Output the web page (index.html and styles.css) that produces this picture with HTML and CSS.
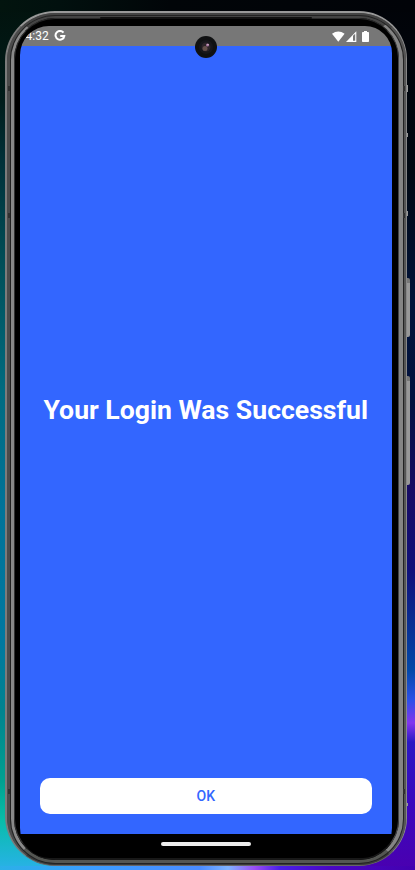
FILE: index.html
```
<!DOCTYPE html>
<html lang="en">
<head>
<meta charset="utf-8">
<title>Login successful</title>
<link rel="stylesheet" href="styles.css">
</head>
<body>
<main class="desktop">
  <div class="side-key power"></div>
  <div class="side-key volume"></div>
  <div class="nub first"></div>
  <div class="nub second"></div>
  <div class="nub third"></div>
  <div class="nub fourth"></div>
  <div class="antenna left upper"></div>
  <div class="antenna left middle"></div>
  <div class="antenna left lower"></div>
  <div class="antenna right upper"></div>
  <div class="antenna right middle"></div>
  <div class="antenna right lower"></div>
  <div class="phone">
    <div class="rail">
      <div class="groove">
        <div class="rim">
          <div class="bezel">
            <div class="screen">
              <header class="status">
                <span class="clock">4:32</span>
                <svg class="google" viewBox="0 0 12 12"><path d="M9.5 2.7A4.4 4.4 0 1 0 10.3 6H6.2" fill="none" stroke="#fff" stroke-width="2"/></svg>
                <span class="spacer"></span>
                <svg class="wifi" viewBox="0 0 13 11"><path d="M0 2.700Q6.300-1.900 12.600 2.700L6.300 10.800Z" fill="#fff"/></svg>
                <svg class="signal" viewBox="0 0 11 11"><path d="M0 11L10.300.3V11Z" fill="#fff"/><path d="M7 4.800L9.200 2.700V9.800H7Z" fill="#777"/></svg>
                <svg class="battery" viewBox="0 0 7 11"><path d="M2 0h3v1h1.200q.8 0 .8.8v8.400q0 .8-.8.800H.8Q0 11 0 10.200V1.800Q0 1 .8 1H2Z" fill="#fff"/></svg>
              </header>
              <section class="content">
                <h1>Your Login Was Successful</h1>
                <button class="ok" type="button">OK</button>
              </section>
              <footer class="navigation"><span class="handle"></span></footer>
            </div>
          </div>
        </div>
      </div>
    </div>
    <div class="speaker"></div>
    <svg class="camera" viewBox="0 0 22 22"><circle cx="11" cy="11" r="11" fill="#101112"/><circle cx="11" cy="11" r="7" fill="#17171b"/><circle cx="11" cy="11" r="4.500" fill="#2c2429"/><circle cx="10" cy="12.500" r="2.500" fill="#65504b"/><circle cx="12.500" cy="9" r="1.500" fill="#a16f98"/><circle cx="13" cy="8.700" r=".6" fill="#f3dff0"/></svg>
  </div>
</main>
</body>
</html>
```
FILE: styles.css
```
* { box-sizing: border-box; }

body {
  margin: 0;
  font-family: Roboto, "Liberation Sans", sans-serif;
}

.desktop {
  position: relative;
  width: 415px;
  height: 870px;
  padding: 11px 8px 0 5px;
  overflow: hidden;
  background:
    linear-gradient(90deg, #02140e 0, #01100e 60px, #010508 170px, #010308 415px) 0 0 / 415px 12px no-repeat,
    linear-gradient(90deg, #2bb0e8 0, #3b9dff 90px, #4a8cff 200px, #7fb4ff 228px, #9a4df5 255px, #4a1fe8 280px, #4a08c4 330px, #4300b0 415px) 0 866px / 415px 4px no-repeat,
    linear-gradient(#010308 0, #010812 170px, #01133a 300px, #02123f 400px, #170b64 490px, #10107a 570px, #0348a8 670px, #2c50e8 700px, #8235ef 723px, #2a18c4 742px, #3a08be 800px, #4a00b0 870px) 300px 0 / 115px 870px no-repeat,
    linear-gradient(#02120d 0, #001c1a 100px, #003038 160px, #00505a 270px, #006b80 390px, #007399 510px, #0078a0 640px, #00838f 710px, #00a090 780px, #08bda8 820px, #22b4dc 860px, #2bb0e8 870px) 0 0 / 150px 870px no-repeat,
    #010508;
}

.phone {
  position: relative;
  height: 855px;
}

.rail,
.groove,
.rim,
.bezel {
  height: 100%;
  border-style: solid;
}

.rail {
  border-width: 2px 1px 1px 2px;
  border-color: #999 #888 #666 #7b7b7b;
  border-radius: 50px 48px 48px 50px;
  background: #4c4c4c;
}

.groove {
  border-width: 3px 3px 2px 4px;
  border-color: #444 #555 #393939 #4b4b4b;
  border-radius: 48px 47px 47px 48px;
  background: #111;
}

.rim {
  border-width: 2px 4px 3px 3px;
  border-color: #444 #858585 #545652 #898989;
  border-radius: 44px;
  background: #000;
  box-shadow: 0 0 0 1px #222;
}

.bezel {
  padding: 7px 6px 0 5px;
  border-width: 1px 1px 2px;
  border-color: #292929 #444 #181818 #333;
  border-radius: 41px 40px 40px 41px;
  background: #000;
}

.screen {
  display: flex;
  flex-direction: column;
  height: 100%;
  overflow: hidden;
  border-radius: 29px 27px 30px 30px;
  background: #000;
}

.status {
  display: flex;
  flex: 0 0 19.5px;
  align-items: center;
  padding: 0 23px 0 5.500px;
  background: #777;
  color: #fff;
}

.clock {
  width: 23px;
  font-size: 12px;
  line-height: 20px;
}

.google {
  width: 12px;
  height: 12px;
  margin-left: 5px;
}

.spacer { flex: 1; }

.wifi {
  width: 13px;
  height: 11px;
}

.signal {
  width: 11px;
  height: 11px;
  margin-left: 1px;
}

.battery {
  width: 7px;
  height: 11px;
  margin-left: 5px;
}

.content {
  display: flex;
  flex: 0 0 788px;
  flex-direction: column;
  padding: 0 20px 20px 19.5px;
  background: #3366ff;
}

h1 {
  display: flex;
  flex: 1;
  align-items: center;
  justify-content: center;
  margin: 0;
  padding-bottom: 4px;
  color: #fff;
  font-size: 26.6px;
  font-weight: 700;
  line-height: 32px;
  white-space: nowrap;
}

.ok {
  flex: 0 0 36.5px;
  padding: 0;
  border: 0;
  border-radius: 10px;
  background: #fff;
  color: #3366ff;
  font: 500 14px/36px Roboto, sans-serif;
}

.navigation {
  display: flex;
  flex: 1;
  justify-content: center;
  padding-top: 8px;
}

.handle {
  width: 90px;
  height: 4px;
  border-radius: 2px;
  background: #ededed;
}

.camera {
  position: absolute;
  top: 25px;
  left: 190px;
  width: 22px;
  height: 22px;
}

.speaker {
  position: absolute;
  top: 6px;
  left: 95px;
  width: 212px;
  height: 2px;
  border-radius: 1px;
  background: #111;
}

.side-key {
  position: absolute;
  left: 406px;
  width: 4px;
  border-top: 5px solid #777;
  border-radius: 0 2px 2px 0;
  background: #989898;
}

.power { top: 278px; height: 59px; }
.volume { top: 376px; height: 109px; }

.nub {
  position: absolute;
  left: 406px;
  width: 2px;
  height: 5px;
  background: #999;
}

.first { top: 85px; height: 7px; }
.second { top: 133px; height: 4px; }
.third { top: 211px; }
.fourth { top: 803px; height: 3px; }

.antenna {
  position: absolute;
  z-index: 1;
  width: 2px;
  height: 5px;
  background: #303030;
}

.left { left: 8px; }
.right { left: 403px; }
.upper { top: 86px; }
.middle { top: 213px; }
.lower { top: 789px; }
```
